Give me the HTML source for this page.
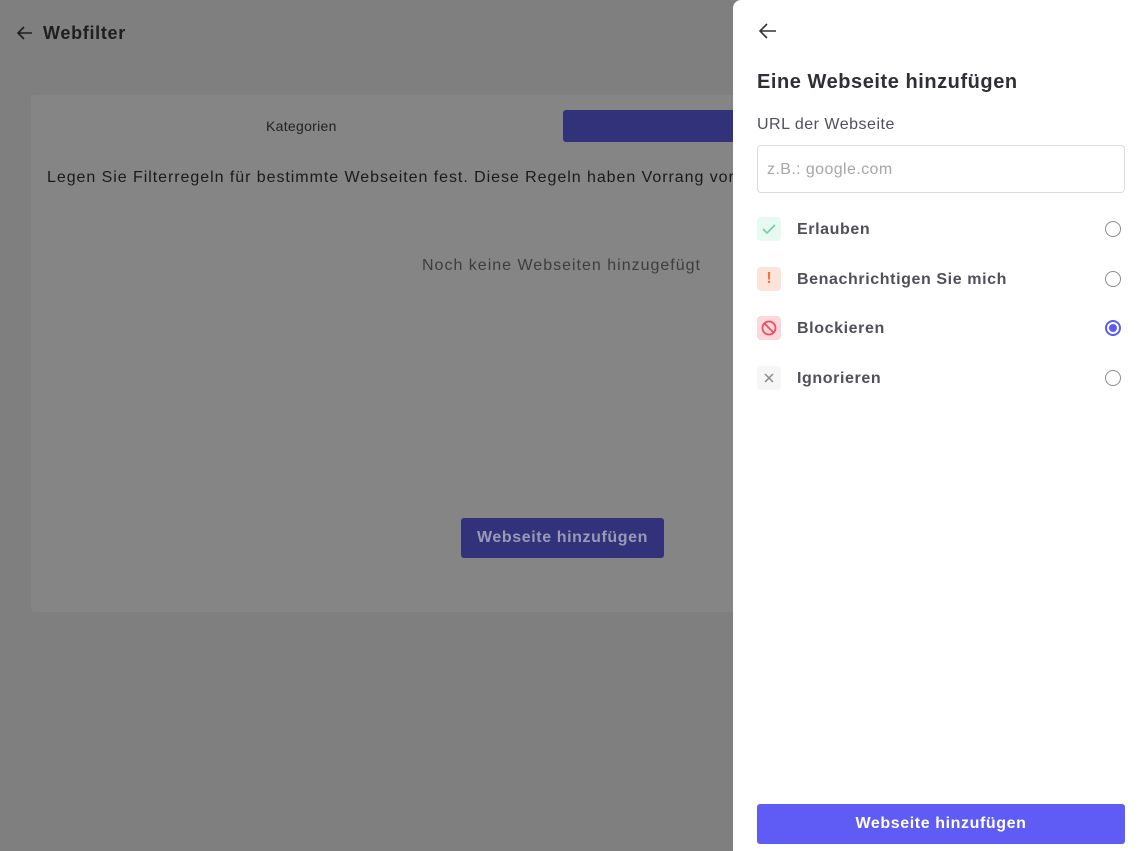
<!DOCTYPE html>
<html><head><style>
*{box-sizing:border-box;margin:0;padding:0}
body{width:1142px;height:851px;overflow:hidden;background:#7f7f7f;font-family:"Liberation Sans",sans-serif;position:relative}
.t{position:absolute;white-space:nowrap}
.card{position:absolute;left:31px;top:95px;width:720px;height:517px;background:#858585;border-radius:4px}
.panel{position:absolute;left:733px;top:0;width:409px;height:851px;background:#fff;border-radius:8px 0 0 0}
.row{position:absolute;left:24px;width:364px;height:24px}
.ic{position:absolute;left:0;top:0;width:24px;height:24px;border-radius:4px;display:flex;align-items:center;justify-content:center}
.lb{position:absolute;left:40px;top:4px;font-size:16px;font-weight:bold;color:#505058;letter-spacing:0.6px}
.rd{position:absolute;right:0;top:4px;width:16px;height:16px;border-radius:50%;border:1.5px solid #8a8a8f}
</style></head><body>
<svg class="t" style="left:16px;top:24px" width="18" height="18" viewBox="0 0 18 18"><path d="M16 9H2M8 3L2 9l6 6" stroke="#1e1e1e" stroke-width="1.6" fill="none"/></svg>
<div class="t" style="left:43px;top:23px;font-size:18px;font-weight:bold;color:#1e1e1e;letter-spacing:0.7px">Webfilter</div>
<div class="card">
<div class="t" style="left:235px;top:23px;font-size:14px;color:#222;letter-spacing:0.3px">Kategorien</div>
<div style="position:absolute;left:532px;top:15px;width:190px;height:32px;background:#32327a;border-radius:3px"></div>
<div class="t" style="left:16px;top:74px;font-size:16px;color:#1a1a1a;letter-spacing:0.95px">Legen Sie Filterregeln für bestimmte Webseiten fest. Diese Regeln haben Vorrang vor</div>
<div class="t" style="left:391px;top:162px;font-size:16px;color:#3d3d3d;letter-spacing:1px">Noch keine Webseiten hinzugefügt</div>
<div style="position:absolute;left:430px;top:423px;width:203px;height:40px;background:#32327a;border-radius:3px;color:#9a9ab8;font-size:16px;font-weight:bold;display:flex;align-items:center;justify-content:center;letter-spacing:0.6px">Webseite hinzufügen</div>
</div>
<div class="panel">
<svg class="t" style="left:25px;top:22px" width="20" height="18" viewBox="0 0 20 18"><path d="M18 9H3M9 2L2 9l7 7" stroke="#333" stroke-width="1.6" fill="none"/></svg>
<div class="t" style="left:24px;top:71px;font-size:20px;font-weight:bold;color:#2f2f36;letter-spacing:0.55px">Eine Webseite hinzufügen</div>
<div class="t" style="left:24px;top:116px;font-size:16px;color:#505058;letter-spacing:0.5px">URL der Webseite</div>
<div style="position:absolute;left:24px;top:145px;width:368px;height:48px;border:1px solid #dcdcdf;border-radius:4px;padding:15px 9px;font-size:16px;color:#a6a6ab;letter-spacing:0.4px">z.B.: google.com</div>
<div class="row" style="top:217px"><div class="ic" style="background:#e6faf2"><svg width="14" height="12"><path d="M1 6l4 4 8-8" stroke="#6ccfa5" stroke-width="1.6" fill="none"/></svg></div><div class="lb">Erlauben</div><div class="rd"></div></div>
<div class="row" style="top:267px"><div class="ic" style="background:#fde4da;color:#f27244;font-weight:bold;font-size:16px">!</div><div class="lb">Benachrichtigen Sie mich</div><div class="rd"></div></div>
<div class="row" style="top:316px"><div class="ic" style="background:#fcd7dc"><svg width="16" height="16"><circle cx="8" cy="8" r="6.5" stroke="#ee4d5f" stroke-width="1.8" fill="none"/><path d="M3.5 3.5l9 9" stroke="#ee4d5f" stroke-width="1.8"/></svg></div><div class="lb">Blockieren</div><div class="rd" style="border-color:#5a5cf0;border-width:2px"><div style="position:absolute;left:2px;top:2px;width:8px;height:8px;border-radius:50%;background:#5a5cf0"></div></div></div>
<div class="row" style="top:366px"><div class="ic" style="background:#f6f6f7"><svg width="12" height="12"><path d="M2 2l8 8M10 2l-8 8" stroke="#8a8a90" stroke-width="1.5"/></svg></div><div class="lb">Ignorieren</div><div class="rd"></div></div>
<div style="position:absolute;left:24px;top:804px;width:368px;height:40px;background:#5e5cf5;border-radius:3px;color:#fff;font-size:16px;font-weight:bold;display:flex;align-items:center;justify-content:center;letter-spacing:0.6px">Webseite hinzufügen</div>
</div>
</body></html>
